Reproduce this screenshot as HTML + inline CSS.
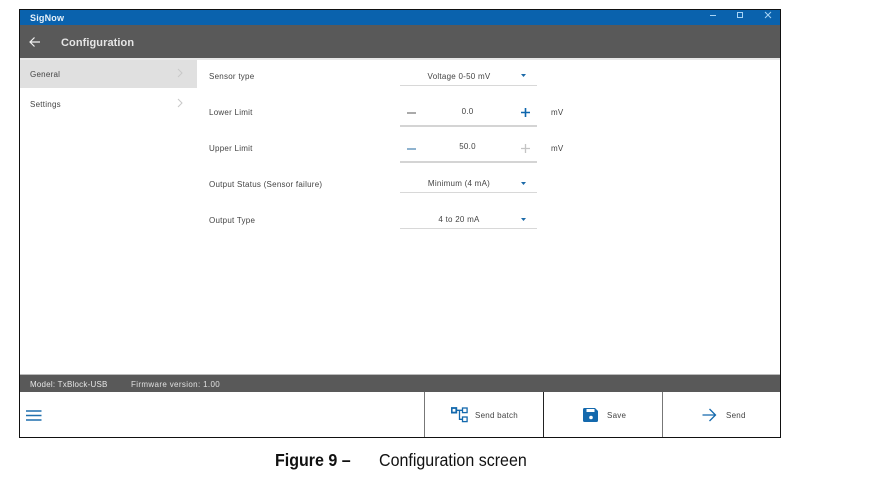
<!DOCTYPE html>
<html><head><meta charset="utf-8"><style>
html,body{margin:0;padding:0;background:#fff;width:876px;height:481px;overflow:hidden}
body{position:relative;font-family:"Liberation Sans",sans-serif;color:#333}
.a{position:absolute;white-space:nowrap}
.t{font-size:8px;line-height:10px;color:#444;letter-spacing:.25px;filter:blur(.25px)}
.c{text-align:center}
.l{position:absolute;left:400px;width:137px;height:1px;background:#d8d8d8}
</style></head><body>
<div class="a" style="left:19px;top:9px;width:762px;height:429px;box-sizing:border-box;border:1px solid #111;background:#fff"></div>
<div class="a" style="left:20px;top:10px;width:760px;height:15px;background:#0a62ad"></div>
<div class="a" style="left:20px;top:25px;width:760px;height:33px;background:#595959"></div>
<div class="a" style="left:20px;top:58px;width:760px;height:2px;background:#e8e8e8"></div>
<div class="a" style="left:30px;top:13px;font-size:9px;line-height:10px;font-weight:bold;color:#e8f2fa;letter-spacing:.2px;filter:blur(.25px)">SigNow</div>
<svg class="a" style="left:700px;top:10px" width="80" height="15" fill="none" stroke="#a8d4f5" stroke-width="1"><path d="M10 5.500h6"/><rect x="37.500" y="2.500" width="5" height="5"/><path d="M65 2l6 6M71 2l-6 6"/></svg>
<svg class="a" style="left:29px;top:36px" width="13" height="12" fill="none" stroke="#f2f2f2" stroke-width="1.200"><path d="M1 6h10M5.500 1.500L1 6l4.500 4.500"/></svg>
<div class="a" style="left:61px;top:37px;font-size:11px;line-height:13px;font-weight:bold;color:#e6e6e6;letter-spacing:.08px;filter:blur(.25px)">Configuration</div>

<div class="a" style="left:20px;top:60px;width:177px;height:28px;background:#e0e0e0"></div>
<div class="a t" style="left:30px;top:70px">General</div>
<div class="a t" style="left:30px;top:100px">Settings</div>
<svg class="a" style="left:176px;top:67px" width="9" height="42" fill="none" stroke="#c8c8c8" stroke-width="1"><path d="M2 2l4 4-4 4M2 32l4 4-4 4"/></svg>

<div class="a t" style="left:209px;top:72px">Sensor type</div>
<div class="a t" style="left:209px;top:108px">Lower Limit</div>
<div class="a t" style="left:209px;top:144px">Upper Limit</div>
<div class="a t" style="left:209px;top:180px">Output Status (Sensor failure)</div>
<div class="a t" style="left:209px;top:216px">Output Type</div>

<div class="a t c" style="left:400px;width:118px;top:72px">Voltage 0-50 mV</div>
<div class="l" style="top:85px"></div>
<svg class="a" style="left:520px;top:73px" width="8" height="5"><path d="M1 1h5L3.500 4z" fill="#1c6aa8"/></svg>

<div class="a t c" style="left:400px;width:135px;top:107px">0.0</div>
<div class="a" style="left:407px;top:112px;width:9px;height:1.500px;background:#aaa"></div>
<svg class="a" style="left:520px;top:107px" width="11" height="11" fill="none" stroke="#0e66ad" stroke-width="1.600"><path d="M1 5.500h9M5.500 1v9"/></svg>
<div class="a" style="left:400px;top:125px;width:137px;height:2px;background:#d4d4d4"></div>
<div class="a t" style="left:551px;top:108px">mV</div>

<div class="a t c" style="left:400px;width:135px;top:142px">50.0</div>
<div class="a" style="left:407px;top:148px;width:9px;height:1.500px;background:#8fb3cf"></div>
<svg class="a" style="left:520px;top:143px" width="11" height="11" fill="none" stroke="#c4c4c4" stroke-width="1.300"><path d="M1 5.500h9M5.500 1v9"/></svg>
<div class="a" style="left:400px;top:161px;width:137px;height:2px;background:#d4d4d4"></div>
<div class="a t" style="left:551px;top:144px">mV</div>

<div class="a t c" style="left:400px;width:118px;top:179px">Minimum (4 mA)</div>
<div class="l" style="top:192px"></div>
<svg class="a" style="left:520px;top:181px" width="8" height="5"><path d="M1 1h5L3.500 4z" fill="#1c6aa8"/></svg>

<div class="a t c" style="left:400px;width:118px;top:215px">4 to 20 mA</div>
<div class="l" style="top:228px"></div>
<svg class="a" style="left:520px;top:217px" width="8" height="5"><path d="M1 1h5L3.500 4z" fill="#1c6aa8"/></svg>

<div class="a" style="left:20px;top:374px;width:760px;height:1px;background:#bbb"></div>
<div class="a" style="left:20px;top:375px;width:760px;height:17px;background:#595959"></div>
<div class="a" style="left:30px;top:380px;font-size:8px;line-height:10px;color:#e6e6e6;letter-spacing:.22px;filter:blur(.25px)">Model: TxBlock-USB</div>
<div class="a" style="left:131px;top:380px;font-size:8px;line-height:10px;color:#e0e0e0;letter-spacing:.35px;filter:blur(.25px)">Firmware version: 1.00</div>

<svg class="a" style="left:26px;top:410px" width="16" height="12" fill="none" stroke="#1f6fae" stroke-width="1.500"><path d="M0 1h15.500M0 5.500h15.500M0 10h15.500"/></svg>

<div class="a" style="left:424px;top:392px;width:1px;height:45px;background:#777"></div>
<div class="a" style="left:543px;top:392px;width:1px;height:45px;background:#222"></div>
<div class="a" style="left:662px;top:392px;width:1px;height:45px;background:#777"></div>

<svg class="a" style="left:451px;top:407px" width="17" height="16" fill="none" stroke="#1469ad" stroke-width="1.300"><rect x=".7" y="1" width="4.600" height="4.600" stroke-width="1.800"/><rect x="11.500" y="1" width="4.600" height="4.600"/><rect x="11.500" y="10" width="4.600" height="4.600"/><path d="M5.500 3.300h6M8.500 3.300v9h3"/></svg>
<div class="a t" style="left:475px;top:411px">Send batch</div>

<svg class="a" style="left:583px;top:407px" width="16" height="16"><path d="M1.500 1h10.500l3 3v9.500a1.500 1.500 0 0 1-1.500 1.500h-12a1.500 1.500 0 0 1-1.500-1.500v-11a1.500 1.500 0 0 1 1.500-1.500z" fill="#1469ad"/><rect x="3.500" y="2" width="8" height="3" fill="#fff"/><circle cx="8" cy="10.500" r="1.800" fill="#fff"/></svg>
<div class="a t" style="left:607px;top:411px">Save</div>

<svg class="a" style="left:702px;top:408px" width="15" height="14" fill="none" stroke="#1469ad" stroke-width="1.300"><path d="M.5 7h13M7.500 1l6 6-6 6"/></svg>
<div class="a t" style="left:726px;top:411px">Send</div>

<div class="a" style="left:275px;top:451px;font-size:17.500px;line-height:18px;font-weight:bold;color:#111;transform:scaleX(.915);transform-origin:left">Figure 9 –</div>
<div class="a" style="left:379px;top:451px;font-size:17.500px;line-height:18px;color:#111;transform:scaleX(.915);transform-origin:left">Configuration screen</div>
</body></html>
